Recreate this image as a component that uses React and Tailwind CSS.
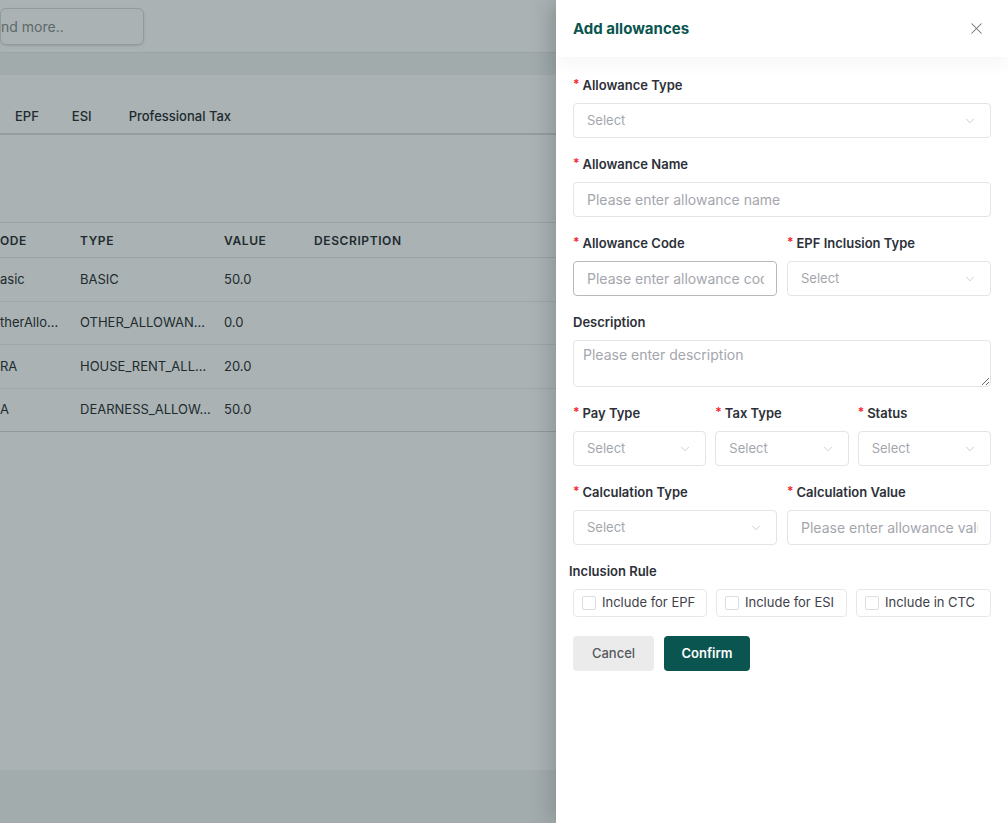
import { ChevronDown, X } from 'lucide-react'

// ── background page (under the mask) ─────────────────────────────────────────
const ROWS = [
  { code: 'asic', type: 'BASIC', value: '50.0' },
  { code: 'therAllo…', type: 'OTHER_ALLOWAN…', value: '0.0' },
  { code: 'RA', type: 'HOUSE_RENT_ALL…', value: '20.0' },
  { code: 'A', type: 'DEARNESS_ALLOW…', value: '50.0' },
]

function BackgroundPage() {
  return (
    <div className="flex flex-col h-full">
      <div className="h-[53px] pt-2 border-b border-[#e6e8e8]">
        <div className="w-[144px] h-[37px] border border-[#d9dcdc] rounded-md flex items-center text-[14px] text-[#8a8f92] shadow-sm">
          nd more..
        </div>
      </div>
      <div className="h-[22px] bg-[#f2f4f4]"></div>
      <div className="h-[60px] border-b-2 border-[#dcdfe0] flex items-end pb-[7px] pl-[15px] gap-[39px] text-[13px] font-medium text-[#2b3036]">
        <span>EPF</span>
        <span className="-ml-[6px]">ESI</span>
        <span className="-ml-[2px]">Professional Tax</span>
      </div>
      <div className="h-[87px]"></div>
      <div className="border-t border-[#e6e8e8]">
        <div className="h-[35px] pt-[2px] flex items-center text-[12px] font-semibold tracking-wider text-[#2b3036] border-b border-[#e6e8e8]">
          <span className="w-[80px]">ODE</span>
          <span className="w-[144px]">TYPE</span>
          <span className="w-[90px]">VALUE</span>
          <span>DESCRIPTION</span>
        </div>
        {ROWS.map((r, i) => (
          <div
            key={i}
            className={`h-[43.5px] flex items-center text-[13px] text-[#2b3036] ${i === ROWS.length - 1 ? 'border-b border-[#d6dada]' : 'border-b border-[#eceeee]'}`}
          >
            <span className="w-[80px]">{r.code}</span>
            <span className="w-[144px]">{r.type}</span>
            <span className="w-[90px]">{r.value}</span>
          </div>
        ))}
      </div>
      <div className="flex-1"></div>
      <div className="h-[53px] bg-[#f4f6f6]"></div>
    </div>
  )
}

// ── drawer form bits ─────────────────────────────────────────────────────────
function Label({ children, required }) {
  return (
    <div className="h-5 mb-[7px] flex items-center text-[13px] font-semibold text-[#2d3038]">
      {required && <span className="text-[#f5222d] mr-[3px] text-[12px] -mt-1">*</span>}
      {children}
    </div>
  )
}

function SelectBox() {
  return (
    <div className="h-[35px] border border-[#e3e4e8] rounded-[4px] flex items-center justify-between pl-[13px] pr-[13px] text-[13px] text-[#a4a6ad]">
      <span>Select</span>
      <ChevronDown size={14} strokeWidth={1.25} className="text-[#b9bbc0]" />
    </div>
  )
}

function TextInput({ placeholder, dark }) {
  return (
    <div className={`h-[35px] border rounded-[4px] flex items-center pl-[13px] pr-[12px] text-[14px] text-[#a4a6ad] overflow-hidden whitespace-nowrap ${dark ? 'border-[#b6b8be]' : 'border-[#e3e4e8]'}`}>
      <span className="overflow-hidden">{placeholder}</span>
    </div>
  )
}

function Field({ label, required, children, className = '' }) {
  return (
    <div className={`min-w-0 ${className}`}>
      <Label required={required}>{label}</Label>
      {children}
    </div>
  )
}

function CheckItem({ label, className = '' }) {
  return (
    <label className={`h-7 border border-[#e6e7ea] rounded-[4px] flex items-center pl-[8px] gap-[6px] text-[13px] text-[#3e4149] ${className}`}>
      <span className="w-[14px] h-[14px] border border-[#dcdde1] rounded-[2px] bg-white"></span>
      {label}
    </label>
  )
}

function AddAllowanceDrawer() {
  return (
    <div className="absolute top-0 right-0 h-full w-[452px] bg-white flex flex-col shadow-[-6px_0_20px_rgba(0,0,0,0.16)]">
      {/* Header */}
      <div className="h-[57px] flex items-center justify-between pl-[17px] pr-[22px] shadow-[0_8px_16px_rgba(0,0,0,0.035)] relative">
        <h2 className="text-[15px] font-bold text-[#0b5550] mt-[1px]">Add allowances</h2>
        <X size={19} strokeWidth={1.3} className="text-[#6b6e75]" />
      </div>

      {/* Form */}
      <div className="px-[17px] pt-[19px]">
        <Field label="Allowance Type" required className="mb-[17px]">
          <SelectBox />
        </Field>
        <Field label="Allowance Name" required className="mb-[17px]">
          <TextInput placeholder="Please enter allowance name" />
        </Field>
        <div className="grid grid-cols-2 gap-[10px] mb-[17px]">
          <Field label="Allowance Code" required>
            <TextInput placeholder="Please enter allowance code" dark />
          </Field>
          <Field label="EPF Inclusion Type" required>
            <SelectBox />
          </Field>
        </div>
        <Field label="Description" className="mb-[17px]">
          <textarea
            className="block w-full h-[47px] border border-[#e3e4e8] rounded-[4px] px-[9px] py-[3px] text-[14px] placeholder-[#a4a6ad] outline-none resize-y"
            placeholder="Please enter description"
          />
        </Field>
        <div className="grid grid-cols-3 gap-[9px] mb-[17px]">
          <Field label="Pay Type" required>
            <SelectBox />
          </Field>
          <Field label="Tax Type" required>
            <SelectBox />
          </Field>
          <Field label="Status" required>
            <SelectBox />
          </Field>
        </div>
        <div className="grid grid-cols-2 gap-[10px] mb-[17px]">
          <Field label="Calculation Type" required>
            <SelectBox />
          </Field>
          <Field label="Calculation Value" required>
            <TextInput placeholder="Please enter allowance value" />
          </Field>
        </div>

        <div className="-ml-[4px] h-5 mb-[7px] flex items-center text-[13px] font-semibold text-[#2d3038]">
          Inclusion Rule
        </div>
        <div className="flex gap-[9px] mb-[19px]">
          <CheckItem label="Include for EPF" className="w-[134px]" />
          <CheckItem label="Include for ESI" className="w-[131px]" />
          <CheckItem label="Include in CTC" className="flex-1" />
        </div>

        <div className="flex gap-[10px]">
          <button className="h-[35px] w-[81px] rounded-[4px] bg-[#ebebeb] text-[13px] font-medium text-[#55585e]">
            Cancel
          </button>
          <button className="h-[35px] w-[86px] rounded-[4px] bg-[#0b5550] text-[13px] font-semibold text-white">
            Confirm
          </button>
        </div>
      </div>
    </div>
  )
}

export default function App() {
  return (
    <div className="relative w-full h-screen overflow-hidden bg-white font-['Inter',sans-serif]">
      <BackgroundPage />
      {/* mask */}
      <div className="absolute inset-0 bg-[rgba(12,35,38,0.35)]"></div>
      <AddAllowanceDrawer />
    </div>
  )
}
